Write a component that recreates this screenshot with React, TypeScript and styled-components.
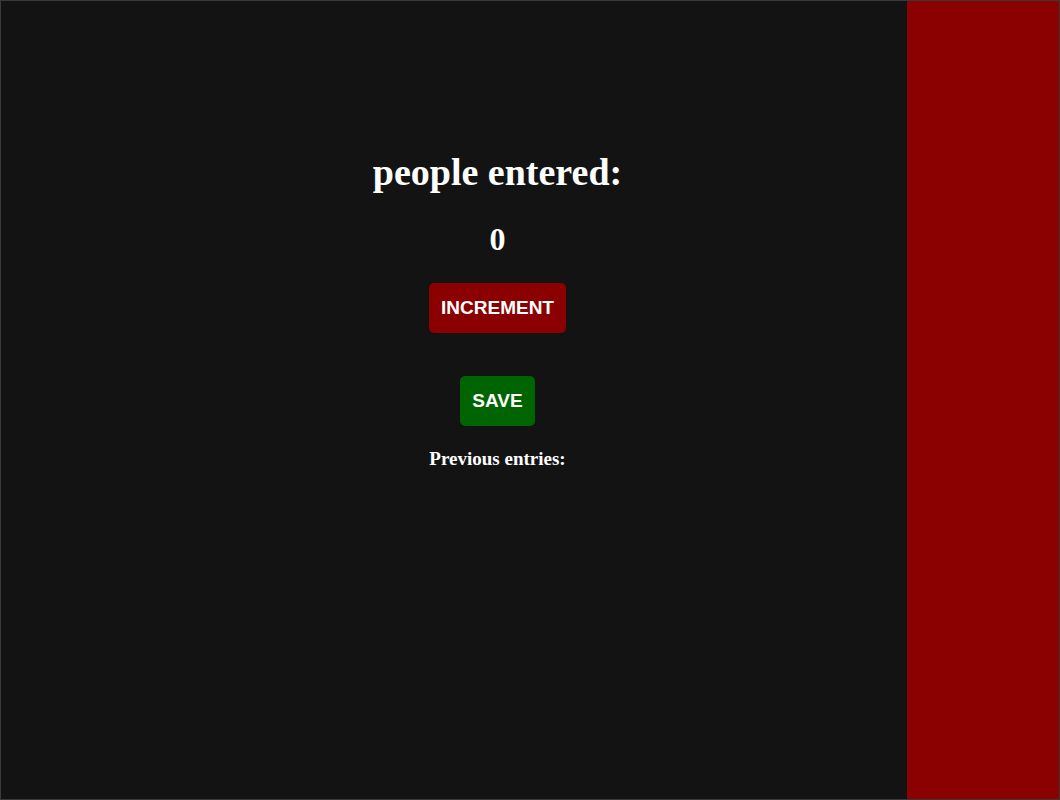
import React, { FC, useState } from "react";
import styled, { createGlobalStyle } from "styled-components";

const GlobalStyle = createGlobalStyle`
  html, body {
    margin: 0;
    padding: 0;
    background: #131313;
  }
`;

const App: FC = () => {
  const [count, setCount] = useState(0);
  const [entries, setEntries] = useState<number[]>([]);

  const save = () => {
    setEntries([...entries, count]);
    setCount(0);
  };

  return (
    <>
      <GlobalStyle />
      <Page>
        <Main>
          <Title>people entered:</Title>
          <Count>{count}</Count>
          <Button $color="#8b0000" onClick={() => setCount(count + 1)}>
            INCREMENT
          </Button>
          <Button $color="#006400" $gap={43} onClick={save}>
            SAVE
          </Button>
          <Entries>
            Previous entries:{entries.length > 0 && " " + entries.join(" - ")}
          </Entries>
        </Main>
        <Sidebar />
      </Page>
    </>
  );
};

const Page = styled.div`
  display: flex;
  width: 100vw;
  height: 100vh;
  box-sizing: border-box;
  border: 1px solid #3a3a3a;
  background: #131313;
  font-family: "Liberation Serif", "Times New Roman", serif;
  color: #fff;
`;

const Main = styled.main`
  flex: 1;
  display: flex;
  flex-direction: column;
  align-items: center;
  padding: 152px 0 0 87px;
`;

const Sidebar = styled.aside`
  width: 152px;
  background: #8b0000;
`;

const Title = styled.h1`
  margin: 0;
  font-size: 38px;
  line-height: 1;
  font-weight: bold;
`;

const Count = styled.h2`
  margin: 32px 0 0;
  font-size: 32px;
  line-height: 1;
  font-weight: bold;
`;

const Button = styled.button<{ $color: string; $gap?: number }>`
  margin-top: ${(p) => p.$gap ?? 28}px;
  height: 50px;
  padding: 0 12px;
  border: none;
  border-radius: 5px;
  background: ${(p) => p.$color};
  color: #fff;
  font-family: "Liberation Sans", Arial, sans-serif;
  font-size: 19px;
  font-weight: bold;
  cursor: pointer;
`;

const Entries = styled.p`
  margin: 23px 0 0;
  font-size: 19px;
  line-height: 1;
  font-weight: bold;
`;

export default App;
